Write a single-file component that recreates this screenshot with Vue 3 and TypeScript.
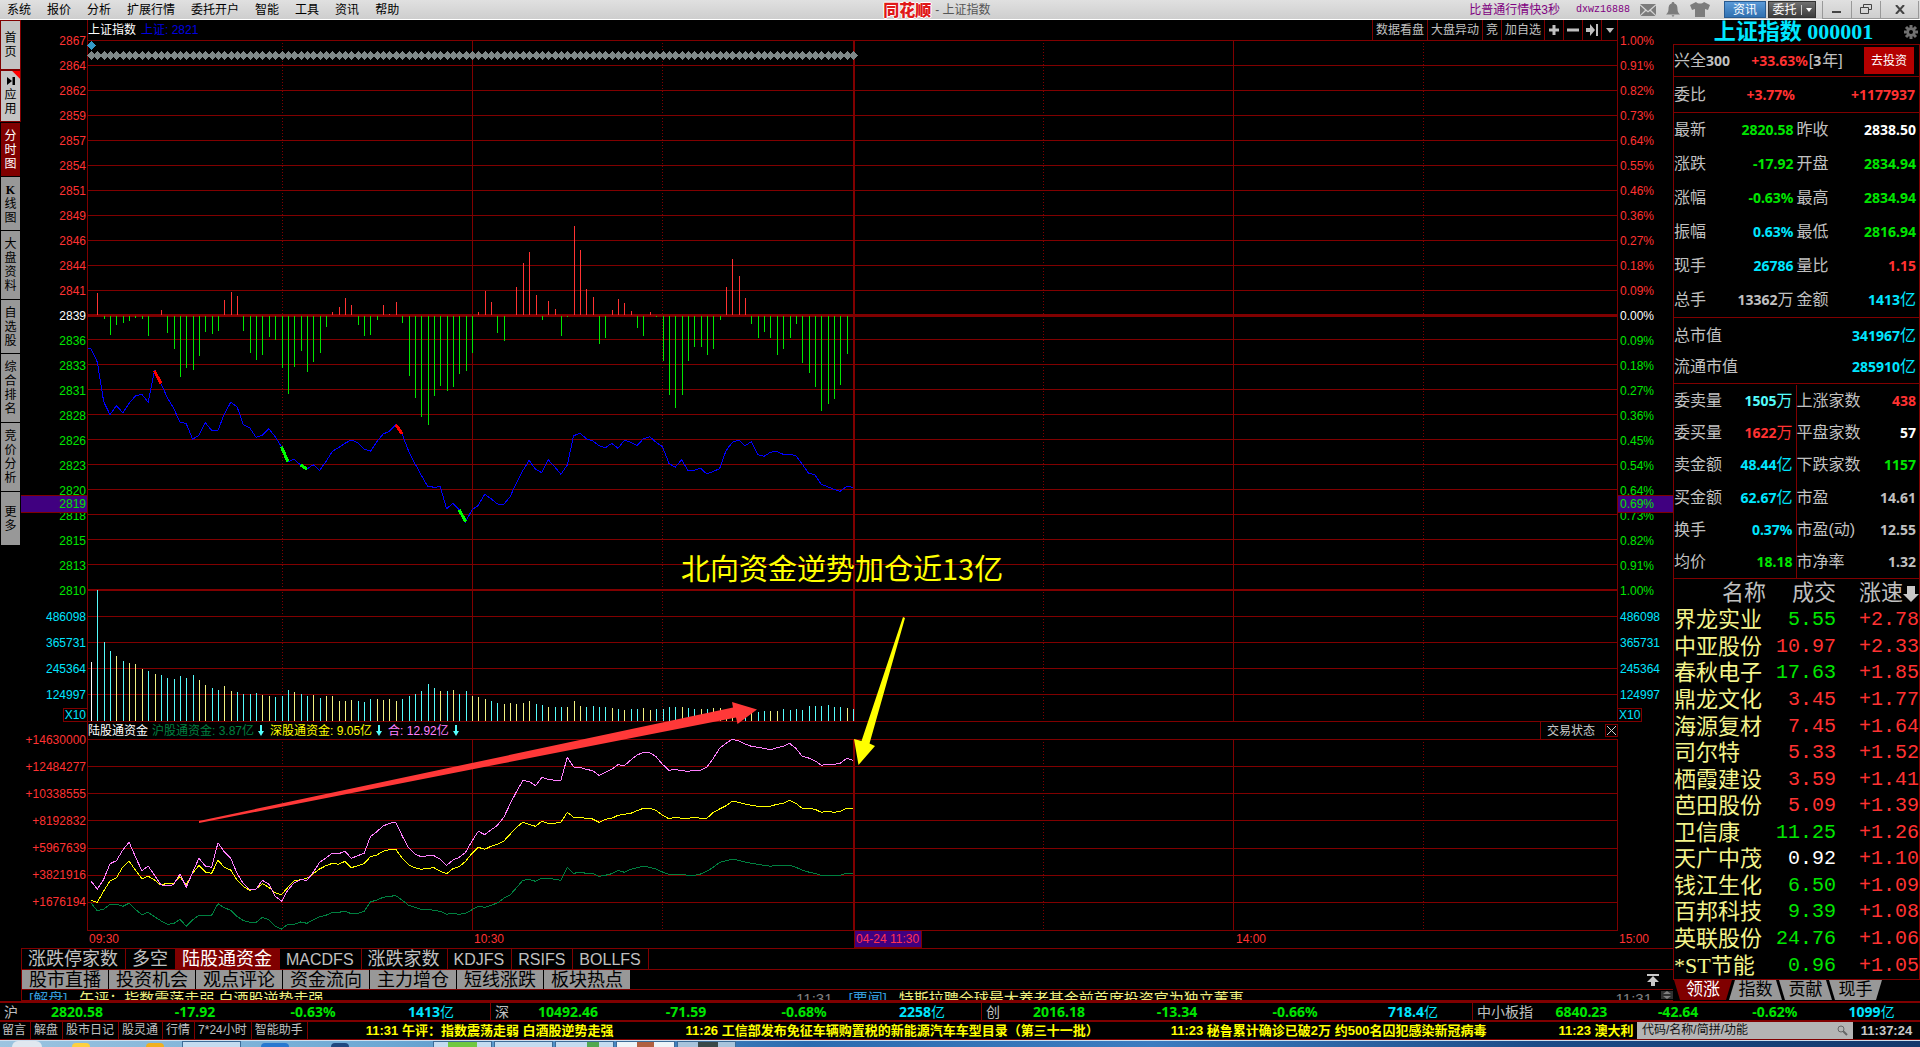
<script setup lang="ts">
type Tone = 'up' | 'down' | 'flat' | 'cyan' | 'aqua' | 'gray'
interface Quote { label: string; value: string; unit?: string; tone: Tone }
interface Stock { name: string; price: string; speed: string; tone: Tone }

const menus = ['系统', '报价', '分析', '扩展行情', '委托开户', '智能', '工具', '资讯', '帮助']

const sideTabs = [
  { text: '首页', kind: 'light', rows: 48 },
  { text: '应用', kind: 'light', rows: 50 },
  { text: '分时图', kind: 'active', rows: 53 },
  { text: 'K线图', kind: 'plain', rows: 53 },
  { text: '大盘资料', kind: 'plain', rows: 68 },
  { text: '自选股', kind: 'plain', rows: 53 },
  { text: '综合排名', kind: 'plain', rows: 68 },
  { text: '竞价分析', kind: 'plain', rows: 68 },
  { text: '更多', kind: 'plain', rows: 53 },
]

const prices = [2867, 2864, 2862, 2859, 2857, 2854, 2851, 2849, 2846, 2844, 2841, 2839, 2836, 2833, 2831, 2828, 2826, 2823, 2820, 2818, 2815, 2813, 2810]
const percents = [
  '1.00', '0.91', '0.82', '0.73', '0.64', '0.55', '0.46', '0.36', '0.27', '0.18', '0.09', '0.00',
  '0.09', '0.18', '0.27', '0.36', '0.45', '0.54', '0.64', '0.73', '0.82', '0.91', '1.00',
]
const volumes = ['486098', '365731', '245364', '124997']
const funds = ['+14630000', '+12484277', '+10338555', '+8192832', '+5967639', '+3821916', '+1676194']
const axisTone = (i: number) => (i < 11 ? 'up' : i === 11 ? 'flat' : 'down')

// Minute samples, 09:30 to 11:30
const x = (i: number) => 91 + 6.35 * i
const px = (i: number) => Math.round(x(i))
const minutes = Array.from({ length: 121 }, (_, i) => i)

const index = [
  446, 486, 605, 644, 617, 638, 610, 588, 583, 607, 513, 550, 592, 625, 666, 671, 718, 706, 668, 691,
  691, 642, 607, 620, 674, 684, 712, 706, 686, 710, 740, 785, 778, 795, 807, 794, 811, 785, 754, 743,
  730, 720, 728, 747, 754, 725, 702, 694, 674, 702, 752, 790, 825, 858, 862, 860, 926, 910, 930, 965,
  930, 916, 883, 896, 912, 913, 890, 848, 812, 781, 808, 818, 779, 800, 823, 795, 707, 700, 716, 722,
  737, 743, 730, 745, 721, 727, 737, 716, 710, 727, 740, 790, 802, 779, 811, 811, 805, 822, 814, 806,
  752, 727, 720, 737, 725, 764, 769, 757, 754, 763, 763, 767, 792, 820, 824, 853, 860, 868, 874, 859, 862,
]

const momentum = [
  0, -22, 4, 20, 10, 8, 6, 3, 4, 21, 1, -5, 18, 34, 62, 53, 55, 41, 17, 19,
  16, -15, -23, -19, 16, 38, 45, 40, 22, 25, 53, 79, 52, 36, 57, 47, 38, 12, -3, -8,
  -17, -10, 10, 21, 20, 5, -10, -1, -13, 8, 61, 83, 102, 110, 81, 71, 76, 72, 59, 56,
  38, -3, -24, -13, 18, 26, 1, -28, -52, -63, -20, 5, -14, -6, 21, 2, -89, -65, -26, -18,
  29, 23, -5, -16, -12, -4, 13, 21, -3, 2, 46, 80, 93, 80, 46, 32, 32, 40, 34, 5,
  -28, -56, -39, -17, 9, 23, 17, 23, 40, 34, 23, 9, 48, 58, 72, 96, 89, 84, 70, 39, 0,
]

const turnover = [
  59, 131, 79, 70, 65, 60, 58, 57, 52, 50, 47, 46, 43, 42, 45, 43, 46, 41, 36, 33,
  31, 35, 30, 29, 27, 27, 28, 26, 25, 24, 25, 31, 29, 27, 25, 26, 23, 25, 25, 20,
  20, 21, 20, 19, 22, 22, 21, 22, 20, 22, 25, 27, 30, 37, 33, 30, 30, 31, 27, 30,
  25, 24, 22, 20, 18, 17, 18, 17, 18, 20, 17, 16, 14, 14, 14, 14, 20, 15, 14, 15,
  14, 14, 13, 12, 11, 12, 12, 13, 11, 12, 12, 14, 14, 14, 13, 12, 12, 12, 13, 13,
  12, 11, 10, 10, 9, 9, 10, 10, 10, 12, 11, 12, 11, 15, 15, 15, 16, 14, 14, 13, 12,
]
// One letter per minute, ten minutes per group
const turnoverTone = [
  'wcccycyyyc', 'yccccccyyc', 'cyyccccyyc', 'ccyccycyyy', 'yycccyyyyc', 'cccccycycc',
  'yyyccyyyyy', 'ccyccyyycc', 'ccycyccyyc', 'cccyccycyy', 'yyccyccyyc', 'cccccccccyc',
].join('')
const turnoverColor: Record<string, string> = { w: '#ffffff', c: '#54fcfc', y: '#f0f080' }

const lower = (rows: number[]) => rows.map((v) => v + 480)
const total = [
  ...lower([
    243, 268, 238, 191, 182, 150, 127, 170, 212, 198, 226, 254, 258, 254, 222, 262, 217, 175, 198, 202,
    128, 156, 174, 220, 251, 270, 267, 241, 252, 288, 304, 270, 248, 239, 241, 217, 187, 174, 160, 161,
    154, 175, 167, 160, 110, 95, 78, 70, 67, 107, 143, 162, 170, 167, 167, 178, 196, 180, 172, 157,
  ]),
  603, 574, 584, 570, 556, 532, 492, 455, 422, 424, 437, 412, 418, 421, 421, 352, 381, 382, 388, 392,
  406, 397, 388, 374, 377, 360, 345, 337, 338, 350, 373, 391, 388, 392, 394, 391, 391, 381, 355, 325,
  310, 298, 303, 312, 319, 322, 325, 330, 323, 319, 310, 325, 349, 354, 362, 376, 373, 373, 370, 355, 361,
]
const shenzhen = [
  ...lower([
    301, 307, 273, 243, 233, 201, 184, 210, 236, 229, 240, 255, 250, 250, 230, 254, 220, 196, 216, 220,
    181, 202, 210, 240, 260, 271, 267, 251, 262, 278, 284, 262, 243, 239, 235, 221, 207, 197, 190, 193,
    184, 203, 197, 191, 170, 165, 154, 149, 148, 174, 194, 203, 208, 205, 203, 214, 221, 206, 200, 184,
  ]),
  640, 622, 628, 619, 613, 603, 583, 562, 547, 553, 559, 544, 550, 550, 547, 517, 532, 532, 535, 537,
  547, 538, 535, 526, 523, 520, 512, 505, 505, 511, 526, 536, 532, 535, 535, 532, 535, 535, 517, 507,
  497, 484, 487, 492, 496, 499, 499, 499, 493, 490, 481, 490, 505, 505, 508, 517, 514, 517, 514, 505, 505,
]
const shanghai = [
  ...lower([
    309, 332, 327, 313, 313, 319, 310, 328, 344, 337, 350, 362, 373, 371, 358, 379, 360, 346, 346, 346,
    311, 323, 331, 349, 362, 367, 367, 352, 359, 378, 387, 373, 373, 366, 370, 359, 350, 346, 337, 337,
    334, 341, 340, 334, 306, 300, 292, 289, 287, 300, 316, 322, 328, 328, 331, 334, 343, 340, 343, 340,
  ]),
  809, 799, 802, 796, 789, 775, 765, 743, 721, 718, 724, 715, 715, 718, 721, 682, 700, 697, 700, 700,
  709, 706, 701, 691, 697, 688, 683, 679, 682, 687, 696, 703, 703, 703, 706, 706, 702, 694, 682, 667,
  662, 658, 661, 666, 670, 673, 676, 679, 676, 676, 676, 682, 690, 696, 700, 706, 706, 706, 706, 700, 700,
]

const line = (rows: number[], base: number) =>
  rows.map((v, i) => `${x(i).toFixed(1)},${(base + v / 3).toFixed(1)}`).join(' ')
const segment = (i: number) =>
  `M${x(i)} ${200 + index[i] / 3}L${x(i + 1)} ${200 + index[i + 1] / 3}`

const priceLines = [40, 65, 90, 115, 140, 165, 190, 215, 240, 265, 290, 339, 364, 389, 414, 439, 464, 489, 514, 539, 564, 616, 642, 668, 694, 721]
const fundLines = [739, 766, 793, 820, 848, 875, 902, 930]
const hLines = (ys: number[]) => ys.map((y) => `M87 ${y + 0.5}H1618`).join('')
const bars = (sign: number) =>
  minutes
    .filter((i) => momentum[i] * sign > 0)
    .map((i) => `M${px(i) + 0.5} ${sign > 0 ? 316 : 315}V${315 + momentum[i]}`)
    .join('')
const volumeBars = (tone: string) =>
  minutes.filter((i) => turnoverTone[i] === tone).map((i) => `M${px(i) + 0.5} 721v${-turnover[i]}`).join('')
const diamonds = minutes.map((i) => `M${px(i) - 4} 55.5l4.5-4.5 4.5 4.5-4.5 4.5z`).join('')

const main: Quote[] = [
  { label: '最新', value: '2820.58', tone: 'down' }, { label: '昨收', value: '2838.50', tone: 'flat' },
  { label: '涨跌', value: '-17.92', tone: 'down' }, { label: '开盘', value: '2834.94', tone: 'down' },
  { label: '涨幅', value: '-0.63%', tone: 'down' }, { label: '最高', value: '2834.94', tone: 'down' },
  { label: '振幅', value: '0.63%', tone: 'cyan' }, { label: '最低', value: '2816.94', tone: 'down' },
  { label: '现手', value: '26786', tone: 'cyan' }, { label: '量比', value: '1.15', tone: 'up' },
  { label: '总手', value: '13362', unit: '万', tone: 'gray' }, { label: '金额', value: '1413', unit: '亿', tone: 'cyan' },
]
const caps: Quote[] = [
  { label: '总市值', value: '341967', unit: '亿', tone: 'cyan' },
  { label: '流通市值', value: '285910', unit: '亿', tone: 'cyan' },
]
const detail: Quote[] = [
  { label: '委卖量', value: '1505', unit: '万', tone: 'aqua' }, { label: '上涨家数', value: '438', tone: 'up' },
  { label: '委买量', value: '1622', unit: '万', tone: 'up' }, { label: '平盘家数', value: '57', tone: 'flat' },
  { label: '卖金额', value: '48.44', unit: '亿', tone: 'cyan' }, { label: '下跌家数', value: '1157', tone: 'down' },
  { label: '买金额', value: '62.67', unit: '亿', tone: 'cyan' }, { label: '市盈', value: '14.61', tone: 'gray' },
  { label: '换手', value: '0.37%', tone: 'cyan' }, { label: '市盈(动)', value: '12.55', tone: 'gray' },
  { label: '均价', value: '18.18', tone: 'down' }, { label: '市净率', value: '1.32', tone: 'gray' },
]
const stocks: Stock[] = [
  { name: '界龙实业', price: '5.55', speed: '+2.78', tone: 'down' },
  { name: '中亚股份', price: '10.97', speed: '+2.33', tone: 'up' },
  { name: '春秋电子', price: '17.63', speed: '+1.85', tone: 'down' },
  { name: '鼎龙文化', price: '3.45', speed: '+1.77', tone: 'up' },
  { name: '海源复材', price: '7.45', speed: '+1.64', tone: 'up' },
  { name: '司尔特', price: '5.33', speed: '+1.52', tone: 'up' },
  { name: '栖霞建设', price: '3.59', speed: '+1.41', tone: 'up' },
  { name: '芭田股份', price: '5.09', speed: '+1.39', tone: 'up' },
  { name: '卫信康', price: '11.25', speed: '+1.26', tone: 'down' },
  { name: '天广中茂', price: '0.92', speed: '+1.10', tone: 'flat' },
  { name: '钱江生化', price: '6.50', speed: '+1.09', tone: 'down' },
  { name: '百邦科技', price: '9.39', speed: '+1.08', tone: 'down' },
  { name: '英联股份', price: '24.76', speed: '+1.06', tone: 'down' },
  { name: '*ST节能', price: '0.96', speed: '+1.05', tone: 'down' },
]
const listTabs = ['领涨', '指数', '贡献', '现手']

const indicators = ['涨跌停家数', '多空', '陆股通资金', 'MACDFS', '涨跌家数', 'KDJFS', 'RSIFS', 'BOLLFS']
const isLatin = (s: string) => /^[A-Z]+$/.test(s)
const channels = ['股市直播', '投资机会', '观点评论', '资金流向', '主力增仓', '短线涨跌', '板块热点']
const news = [
  { tag: '[解盘]', title: '午评：指数震荡走弱 白酒股逆势走强', time: '11:31' },
  { tag: '[要闻]', title: '特斯拉聘全球最大养老基金前首席投资官为独立董事', time: '11:31' },
]
const markets = [
  { name: '沪', values: ['2820.58', '-17.92', '-0.63%'], amount: '1413' },
  { name: '深', values: ['10492.46', '-71.59', '-0.68%'], amount: '2258' },
  { name: '创', values: ['2016.18', '-13.34', '-0.66%'], amount: '718.4' },
  { name: '中小板指', values: ['6840.23', '-42.64', '-0.62%'], amount: '1099' },
]
const shortcuts = ['留言', '解盘', '股市日记', '股灵通', '行情', '7*24小时', '智能助手']
const ticker = [
  '11:31 午评：指数震荡走弱 白酒股逆势走强',
  '11:26 工信部发布免征车辆购置税的新能源汽车车型目录（第三十一批）',
  '11:23 秘鲁累计确诊已破2万 约500名囚犯感染新冠病毒',
  '11:23 澳大利',
]
</script>

<template>
  <div class="app">
    <header class="titlebar">
      <nav class="menus">
        <button v-for="m in menus" :key="m" type="button">{{ m }}</button>
      </nav>
      <div class="caption"><b>同花顺</b><span>- 上证指数</span></div>
      <div class="account">
        <a href="#" class="promo">比普通行情快3秒</a>
        <a href="#" class="user">dxwz16888</a>
        <button type="button" aria-label="消息">
          <svg width="16" height="12" viewBox="0 0 16 12"><path d="M0 0h16L8 7z M0 1.500v9.500L5 6z M16 1.500v9.500L11 6z M.5 12L6 7l2 1.500L10 7l5.500 5z" fill="#7c7c7c" /></svg>
        </button>
        <button type="button" aria-label="提醒">
          <svg width="14" height="15" viewBox="0 0 14 15"><path d="M7 0a1.300 1.300 0 0 1 1.300 1.500C11 2.300 11.500 4.500 11.500 7c0 3 1 4 2.500 5.500H0C1.500 11 2.500 10 2.500 7c0-2.500.5-4.700 3.200-5.500A1.300 1.300 0 0 1 7 0zM5.500 13.200h3L7 15z" fill="#7c7c7c" /></svg>
        </button>
        <button type="button" aria-label="皮肤">
          <svg width="20" height="15" viewBox="0 0 20 15"><path d="M6 0c2 2 6 2 8 0l6 3-2 5-3-1v8H5V7L2 8 0 3z" fill="#7c7c7c" /></svg>
        </button>
        <button type="button" class="chip blue">资讯</button>
        <button type="button" class="chip dark">委托<i></i><svg width="6" height="4" viewBox="0 0 6 4"><path d="M0 0h6L3 4z" fill="#fff" /></svg></button>
        <div class="window-keys">
          <button type="button" aria-label="最小化"><svg width="10" height="10" viewBox="0 0 10 10"><path d="M0 7h9v2H0z" fill="#444" /></svg></button>
          <button type="button" aria-label="还原"><svg width="12" height="10" viewBox="0 0 12 10"><path d="M3.500 3V.5h8v5H9M.5 3.500h8v6h-8z" fill="none" stroke="#444" /></svg></button>
          <button type="button" aria-label="关闭"><svg width="10" height="9" viewBox="0 0 10 9"><path d="M1 0l8 9M9 0L1 9" stroke="#444" stroke-width="2" /></svg></button>
        </div>
      </div>
    </header>

    <main class="body">
      <nav class="side">
        <button v-for="t in sideTabs" :key="t.text" type="button" :class="t.kind" :style="{ height: t.rows + 'px' }">
          <svg v-if="t.text === '应用'" class="skip" width="8" height="8" viewBox="0 0 8 8"><path d="M0 0l5 4-5 4zM5.500 0H8v8H5.500z" fill="#000" /></svg>
          <span v-for="c in t.text" :key="c" :class="{ latin: c === 'K' }">{{ c }}</span>
        </button>
      </nav>

      <section class="center">
        <div class="chart">
          <div class="axis left">
            <div class="price-labels">
              <span v-for="(p, i) in prices" :key="p" :class="axisTone(i)">{{ p }}</span>
            </div>
            <div class="vol-labels"><span v-for="v in volumes" :key="v">{{ v }}</span></div>
            <span class="scale">X10</span>
            <div class="fund-labels"><span v-for="f in funds" :key="f">{{ f }}</span></div>
            <span class="cursor-tag">2819</span>
          </div>

          <div class="plot">
            <div class="plot-head">
              <div class="series-name"><span>上证指数</span><span class="blue-text">上证: 2821</span></div>
              <div class="tools">
                <button type="button">数据看盘</button>
                <button type="button">大盘异动</button>
                <button type="button">竞</button>
                <button type="button">加自选</button>
                <button type="button" aria-label="放大"><svg width="12" height="12" viewBox="0 0 12 12"><path d="M4.500 1h3v3.500H11v3H7.500V11h-3V7.500H1v-3h3.500z" fill="#c0c0c0" /></svg></button>
                <button type="button" aria-label="缩小"><svg width="12" height="12" viewBox="0 0 12 12"><path d="M0 4.500h12v3H0z" fill="#c0c0c0" /></svg></button>
                <button type="button" aria-label="跳到最新"><svg width="12" height="12" viewBox="0 0 12 12"><path d="M0 4h4V0l5 6-5 6V8H0zM10 0h2v12h-2z" fill="#c0c0c0" /></svg></button>
                <button type="button" class="last" aria-label="更多"><svg width="8" height="5" viewBox="0 0 8 5"><path d="M0 0h8L4 5z" fill="#c0c0c0" /></svg></button>
              </div>
            </div>

            <svg class="pane price-pane" viewBox="87 40 1531 682" preserveAspectRatio="none" shape-rendering="crispEdges">
              <g stroke="#800000" fill="none">
                <path :d="hLines(priceLines)" />
                <path d="M87 315.500H1618" stroke-width="3" />
                <path d="M87 590H1618" stroke-width="2" />
                <path d="M87.500 40V722M472.500 40V721M1233.500 40V721M1617.500 40V722" />
                <path d="M282.500 43V721M662.500 43V721M1043.500 43V721M1423.500 43V721" stroke-dasharray="1 2" />
                <path d="M854 40V721" stroke-width="2" />
              </g>
              <path :d="bars(-1)" stroke="#ff3232" />
              <path :d="bars(1)" stroke="#00e600" />
              <path v-for="t in ['w', 'c', 'y']" :key="t" :d="volumeBars(t)" :stroke="turnoverColor[t]" />
              <polyline :points="'88,348.700 ' + line(index, 200)" fill="none" stroke="#0000ff" />
              <path :d="segment(10) + segment(48)" stroke="#ff0000" stroke-width="3" />
              <path :d="segment(30) + segment(33) + segment(58)" stroke="#00ff00" stroke-width="3" />
              <path d="M91 55.500H854" stroke="#7f8888" stroke-width="3" />
              <path :d="diamonds" fill="#7f8888" />
              <path d="M87 45.500l4.500-4.500 4.500 4.500-4.500 4.500z" fill="#3399c8" />
            </svg>

            <div class="fund-head">
              <span>陆股通资金</span>
              <span class="sh">沪股通资金: 3.87亿</span>
              <svg width="6" height="11" viewBox="0 0 6 11"><path d="M2 0h2v6h2L3 11 0 6h2z" fill="#54fcfc" /></svg>
              <span class="sz">深股通资金: 9.05亿</span>
              <svg width="6" height="11" viewBox="0 0 6 11"><path d="M2 0h2v6h2L3 11 0 6h2z" fill="#54fcfc" /></svg>
              <span class="sum">合: 12.92亿</span>
              <svg width="6" height="11" viewBox="0 0 6 11"><path d="M2 0h2v6h2L3 11 0 6h2z" fill="#54fcfc" /></svg>
              <button type="button" class="state">交易状态</button>
              <button type="button" class="close" aria-label="关闭"><svg width="9" height="9" viewBox="0 0 9 9"><path d="M0 0l9 9M9 0L0 9" stroke="#d0d0d0" /></svg></button>
            </div>

            <svg class="pane fund-pane" viewBox="87 739 1531 192" preserveAspectRatio="none" shape-rendering="crispEdges">
              <g stroke="#800000" fill="none">
                <path :d="hLines(fundLines)" />
                <path d="M87.500 739V931M472.500 739V931M1233.500 739V931M1617.500 739V931" />
                <path d="M282.500 742V931M662.500 742V931M1043.500 742V931M1423.500 742V931" stroke-dasharray="1 2" />
                <path d="M854 739V931" stroke-width="2" />
              </g>
              <polyline :points="line(shanghai, 640)" fill="none" stroke="#008040" />
              <polyline :points="line(shenzhen, 640)" fill="none" stroke="#ffff00" />
              <polyline :points="line(total, 640)" fill="none" stroke="#ff80ff" />
            </svg>

            <div class="times">
              <span>09:30</span><span>10:30</span><span class="now"><mark>04-24 11:30</mark></span><span>14:00</span>
            </div>

            <svg class="marks" viewBox="87 20 1531 928" preserveAspectRatio="none">
              <path d="M199 821L733 707.500 732 702 757 709.500 737.500 724 736 717.500 199 823z" fill="#ff3838" />
              <path d="M903 617L905 618 869.500 743.500 875 746 858.500 765 854 739 861.500 741z" fill="#ffff00" />
            </svg>
            <p class="note">北向资金逆势加仓近13亿</p>
          </div>

          <div class="axis right">
            <div class="price-labels">
              <span v-for="(p, i) in percents" :key="i" :class="axisTone(i)">{{ p }}%</span>
            </div>
            <div class="vol-labels"><span v-for="v in volumes" :key="v">{{ v }}</span></div>
            <span class="scale">X10</span>
            <span class="end-time">15:00</span>
            <span class="cursor-tag">0.69%</span>
          </div>
        </div>

        <nav class="indicators">
          <button v-for="t in indicators" :key="t" type="button" :class="{ active: t === '陆股通资金', latin: isLatin(t) }">{{ t }}</button>
        </nav>
        <nav class="channels">
          <button v-for="c in channels" :key="c" type="button">{{ c }}</button>
          <button type="button" class="to-top" aria-label="展开"><svg width="12" height="12" viewBox="0 0 12 12"><path d="M0 0h12v2H0zM6 2l6 6H8v4H4V8H0z" fill="#c8c8c8" /></svg></button>
        </nav>
        <div class="news">
          <a v-for="n in news" :key="n.tag" href="#"><em>{{ n.tag }}</em><span>{{ n.title }}</span><time>{{ n.time }}</time></a>
          <button type="button" class="spin" aria-label="滚动"><svg width="8" height="8" viewBox="0 0 8 8"><path d="M0 3h8L4 0zM0 5h8L4 8z" fill="#808080" /></svg></button>
        </div>
      </section>

      <aside class="panel">
        <h1>上证指数 000001
          <svg class="gear" width="16" height="16" viewBox="0 0 16 16"><path d="M8 1v14M1 8h14M3 3l10 10M13 3L3 13" stroke="#707070" stroke-width="3" /><circle cx="8" cy="8" r="4.500" fill="#707070" /><circle cx="8" cy="8" r="2" fill="#000" /></svg>
        </h1>
        <div class="fund-ad">
          <span>兴全<b>300</b></span>
          <span class="rate"><b class="up">+33.63%</b>[<b>3</b>年]</span>
          <button type="button">去投资</button>
        </div>
        <div class="ratio"><span>委比</span><b class="up">+3.77%</b><b class="up end">+1177937</b></div>
        <dl class="pairs main">
          <div v-for="q in main" :key="q.label"><dt>{{ q.label }}</dt><dd :class="q.tone"><b>{{ q.value }}</b>{{ q.unit }}</dd></div>
        </dl>
        <dl class="caps">
          <div v-for="q in caps" :key="q.label"><dt>{{ q.label }}</dt><dd :class="q.tone"><b>{{ q.value }}</b>{{ q.unit }}</dd></div>
        </dl>
        <dl class="pairs detail">
          <div v-for="q in detail" :key="q.label"><dt>{{ q.label }}</dt><dd :class="q.tone"><b>{{ q.value }}</b>{{ q.unit }}</dd></div>
        </dl>
        <table class="stocks">
          <thead>
            <tr><th>名称</th><th>成交</th><th>涨速<svg width="16" height="16" viewBox="0 0 16 16"><path d="M4 0h8v8h4l-8 8-8-8h4z" fill="#c8c8c8" /></svg></th></tr>
          </thead>
          <tbody>
            <tr v-for="s in stocks" :key="s.name"><td>{{ s.name }}</td><td :class="s.tone">{{ s.price }}</td><td class="up">{{ s.speed }}</td></tr>
          </tbody>
        </table>
        <nav class="list-tabs">
          <button v-for="t in listTabs" :key="t" type="button" :class="{ active: t === '领涨' }">{{ t }}</button>
        </nav>
      </aside>
    </main>

    <section class="markets">
      <div v-for="m in markets" :key="m.name">
        <span>{{ m.name }}</span>
        <b v-for="v in m.values" :key="v" class="down">{{ v }}</b>
        <span class="amount"><b>{{ m.amount }}</b>亿</span>
      </div>
    </section>

    <footer class="status">
      <nav><a v-for="s in shortcuts" :key="s" href="#">{{ s }}</a></nav>
      <div class="ticker"><a v-for="t in ticker" :key="t" href="#">{{ t }}</a></div>
      <label class="search">
        <input type="text" placeholder="代码/名称/简拼/功能" aria-label="代码/名称/简拼/功能" />
        <svg width="11" height="11" viewBox="0 0 11 11"><circle cx="4" cy="4" r="3" fill="none" stroke="#666" /><path d="M6 6l4 4" stroke="#666" stroke-width="2" /></svg>
      </label>
      <time>11:37:24</time>
    </footer>
    <div class="taskbar">
      <i class="orb"></i><i class="bit gold"></i><i class="bit amber"></i><i class="win"></i><i class="bit navy"></i><i class="bit ring"></i>
      <i class="win green"></i><i class="win"></i><i class="win leaf"></i><i class="win brown"></i><i class="win globe"></i>
    </div>
  </div>
</template>

<style>
body { margin: 0; background: #000; }
</style>

<style scoped>
.app {
  --line: #800000;
  display: flex;
  flex-direction: column;
  min-height: 100vh;
  background: #000;
  color: #c0c0c0;
  font: 12px/16px "Liberation Sans", "Noto Sans CJK SC", sans-serif;
  overflow: hidden;
}
.app * { box-sizing: border-box; }
button { font: inherit; color: inherit; background: none; border: 0; padding: 0; margin: 0; white-space: nowrap; }
a { color: inherit; text-decoration: none; white-space: nowrap; }
svg { display: block; flex: none; }
i { display: block; }
dl, dd, p, h1 { margin: 0; }

.up { color: #ff3232; }
.down { color: #00e600; }
.flat { color: #fff; }
.cyan { color: #00e6ff; }
.aqua { color: #54fcfc; }
.gray { color: #c0c0c0; }

.titlebar {
  display: grid;
  grid-template-columns: 46% auto 1fr;
  height: 20px;
  background: linear-gradient(#e0e0e0, #cecece);
  border-bottom: 1px solid #fff;
  color: #000;
}
.menus { display: flex; gap: 16px; padding-left: 7px; }
.caption { display: flex; align-items: center; gap: 4px; color: #555; }
.caption b {
  color: #e01818;
  font-size: 16px;
  font-weight: 900;
  text-shadow: 1px 0 #fff, -1px 0 #fff, 0 1px #fff, 0 -1px #fff;
}
.account { display: flex; align-items: center; justify-content: flex-end; padding-right: 1px; }
.promo { color: #800080; margin-right: 16px; }
.user { color: #800080; font: 10px/16px "Liberation Mono", monospace; }
.account > button { margin-left: 10px; }
.account > .chip {
  display: flex;
  align-items: center;
  justify-content: center;
  gap: 4px;
  height: 17px;
  width: 42px;
  color: #fff;
  margin-left: 14px;
  border: 1px solid #285a90;
}
.chip.blue { background: linear-gradient(#5a9ad8, #3070b0); }
.account > .chip.dark { width: 48px; margin-left: 2px; background: linear-gradient(#707070, #3c3c3c); border-color: #333; }
.chip i { width: 1px; height: 10px; background: #ccc; }
.window-keys { display: flex; margin-left: 6px; height: 18px; border: 1px solid #999; border-top: 0; }
.window-keys button { display: flex; align-items: center; justify-content: center; width: 29px; border-right: 1px solid #999; }
.window-keys button:last-child { width: 37px; border-right: 0; }

.body { display: grid; grid-template-columns: 21px minmax(0, 1fr) 247px; flex: 1; }

.side { display: flex; flex-direction: column; gap: 1px; padding: 1px 1px 0; }
.side button {
  display: flex;
  flex-direction: column;
  align-items: center;
  justify-content: center;
  width: 19px;
  background: #989898;
  color: #000;
  line-height: 14px;
}
.side .light { background: #c4c4c4; outline: 1px solid var(--line); margin-bottom: 1px; }
.side .light:nth-child(2) { background: linear-gradient(225deg, #f00 5px, #c4c4c4 6px); }
.side .active { background: var(--line); color: #fff; }
.side .latin { font-family: "Liberation Serif", serif; font-weight: bold; }
.skip { margin-bottom: 3px; }

.center { display: flex; flex-direction: column; min-width: 0; }
.chart { display: grid; grid-template-columns: 66px minmax(0, 1fr) 55px; }
.axis { position: relative; display: flex; flex-direction: column; padding-top: 9px; color: #00e6ff; }
.axis.left { text-align: right; align-items: flex-end; }
.axis.right { align-items: flex-start; }
.axis div { display: flex; flex-direction: column; padding: 0 2px; }
.axis.left div { padding: 0 1px; }
.price-labels span { line-height: 25px; }
.vol-labels span { line-height: 26px; }
.scale { height: 14px; padding: 0 1px; border: 1px solid var(--line); line-height: 12px; }
.axis.left .scale { border-right: 0; }
.axis.right .scale { border-left: 0; }
.fund-labels { margin-top: 5px; color: #ff3232; }
.fund-labels span { line-height: 27px; }
.end-time { margin-top: auto; padding-left: 1px; color: #ff3232; line-height: 18px; }
.cursor-tag {
  position: absolute;
  top: 475px;
  left: 0;
  right: 0;
  height: 18px;
  padding: 0 2px;
  border: 1px solid var(--line);
  border-width: 1px 0;
  background: #400080;
  color: #00e600;
}
.axis.left .cursor-tag { padding-right: 1px; }

.plot { position: relative; min-width: 0; }
.plot-head { display: flex; justify-content: space-between; height: 20px; border-left: 1px solid var(--line); }
.series-name { display: flex; gap: 5px; color: #fff; line-height: 20px; }
.blue-text { color: #0000e0; }
.tools { display: flex; border-right: 1px solid var(--line); height: 20px; }
.tools button { display: flex; align-items: center; justify-content: center; border-left: 1px solid var(--line); padding: 0 3px; min-width: 19px; }
.tools .last { min-width: 16px; }
.pane { width: 100%; }
.price-pane { height: 682px; }
.fund-pane { height: 192px; }
.fund-head { display: flex; align-items: center; height: 17px; color: #fff; border-left: 1px solid var(--line); white-space: nowrap; }
.fund-head svg { margin: 0 6px 0 4px; }
.sh { color: #008040; margin-left: 4px; }
.sz { color: #ff0; }
.sum { color: #ff80ff; }
.state { margin-left: auto; padding: 0 10px 0 6px; height: 17px; border-left: 1px solid var(--line); color: #c8c8c8; }
.close { display: flex; align-items: center; justify-content: center; width: 13px; height: 13px; border: 1px solid var(--line); }
.fund-head .close svg { margin: 0; }
.times { display: grid; grid-template-columns: 385fr 381fr 381fr 384fr; height: 17px; color: #ff3232; line-height: 16px; }
.times span { padding-left: 2px; white-space: nowrap; }
.times .now { padding-left: 1px; }
mark { display: inline-block; background: #400080; color: #ff3250; padding: 0 2px 0 1px; border: 1px solid var(--line); border-top: 0; line-height: 16px; }
.marks { position: absolute; inset: 0; width: 100%; height: 100%; }
.note {
  position: absolute;
  left: 38.8%;
  top: 526px;
  color: #ff0;
  font: 29px/42px "Noto Sans CJK SC", sans-serif;
  white-space: nowrap;
}

.indicators { display: flex; height: 22px; border: 1px solid var(--line); border-right: 0; }
.indicators button { padding: 0 7px 0 6px; border-right: 1px solid var(--line); font-size: 18px; line-height: 19px; }
.indicators .latin { font-size: 16px; }
.indicators .active { background: var(--line); color: #fff; }
.channels { display: flex; height: 20px; border-bottom: 1px solid var(--line); border-left: 1px solid var(--line); gap: 1px; }
.channels button { height: 19px; padding: 0 7px; background: #989898; color: #000; font-size: 18px; line-height: 16px; }
.channels .to-top { background: none; margin-left: auto; padding-right: 14px; }
.news { display: flex; height: 11px; padding: 1px 0; border-left: 1px solid var(--line); border-bottom: 1px solid var(--line); overflow: hidden; }
.news a { display: flex; flex: 1; height: 9px; padding-left: 7px; font-size: 15px; line-height: 16px; color: #f0f080; overflow: hidden; }
.news em { color: #3399d8; font-style: normal; margin-right: 12px; }
.news time { margin-left: auto; margin-right: 9px; color: #808080; }
.spin { width: 12px; background: #303030; display: flex; justify-content: center; }

.panel { display: flex; flex-direction: column; font-size: 16px; min-width: 0; }
b { font-family: "Noto Sans", "Noto Sans CJK SC", sans-serif; font-size: 14px; }
h1 {
  position: relative;
  height: 24px;
  padding-right: 6px;
  text-align: center;
  color: #00e6ff;
  font: bold 22px/24px "Liberation Serif", "Noto Sans CJK SC", serif;
}
.gear { position: absolute; right: 1px; top: 4px; }
.fund-ad, .ratio { display: flex; align-items: center; border: 1px solid var(--line); border-bottom: 0; }
.fund-ad { height: 32px; padding-right: 5px; }
.rate { margin: 0 auto; }
.rate b { margin-right: 1px; }
.fund-ad button { width: 50px; height: 27px; background: #b40000; color: #fff; font-size: 12px; }
.ratio { height: 36px; padding-right: 4px; }
.ratio b { width: 89px; text-align: right; }
.ratio .end { margin-left: auto; }
.pairs { display: grid; grid-template-columns: 1fr 1fr; border: 1px solid var(--line); border-bottom: 0; grid-auto-rows: 1fr; }
.pairs.main { height: 205px; }
.pairs.detail { height: 195px; padding-top: 1px; }
.pairs div, .caps div { display: flex; align-items: center; justify-content: space-between; white-space: nowrap; padding-right: 3px; }
.pairs.detail div:nth-child(odd) { border-right: 1px solid var(--line); }
.caps { height: 66px; padding-top: 2px; border: 1px solid var(--line); border-bottom: 0; display: grid; grid-auto-rows: 1fr; }
.stocks {
  width: 100%;
  height: 402px;
  border-collapse: separate;
  border-spacing: 0;
  border: 1px solid var(--line);
  table-layout: fixed;
  font: 22px/24px "Liberation Serif", "Noto Sans CJK SC", serif;
}
.stocks th, .stocks td { height: 26px; padding: 0; white-space: nowrap; text-align: right; }
.stocks th { height: 28px; font-weight: normal; }
.stocks th:first-child { width: 92px; }
.stocks th:nth-child(2) { width: 70px; }
.stocks th svg { display: inline-block; vertical-align: -2px; }
.stocks td { font: 20px/24px "Liberation Mono", monospace; }
.stocks td:first-child { text-align: left; color: #f4f48c; font: 22px/24px "Liberation Serif", "Noto Sans CJK SC", serif; }
.list-tabs { display: flex; height: 21px; padding-left: 1px; }
.list-tabs button {
  width: 53px;
  height: 20px;
  margin-right: -3px;
  font-size: 17px;
  line-height: 18px;
  background: #989898;
  color: #000;
  clip-path: polygon(0 0, calc(100% - 6px) 0, 100% 100%, 6px 100%);
}
.list-tabs .active { width: 58px; background: var(--line); color: #fff; clip-path: polygon(0 0, 100% 0, calc(100% - 6px) 100%, 6px 100%); }
.list-tabs button:nth-child(2) { clip-path: polygon(6px 0, calc(100% - 6px) 0, 100% 100%, 0 100%); }
.list-tabs button:last-child { clip-path: polygon(0 0, 100% 0, calc(100% - 6px) 100%, 6px 100%); }

.markets { display: grid; grid-template-columns: 490fr 491fr 491fr 448fr; height: 21px; border: solid var(--line); border-width: 2px 0; }
.markets div { display: grid; grid-template-columns: auto repeat(4, 1fr); align-items: center; padding-left: 4px; font-size: 14px; text-align: center; line-height: 16px; }
.markets div + div { border-left: 1px solid var(--line); }
.amount { color: #00e6ff; }

.status { display: flex; height: 18px; border-bottom: 1px solid var(--line); line-height: 17px; }
.status nav { display: flex; }
.status nav a { padding: 0 4px 0 3px; border-right: 1px solid var(--line); }
.status nav a:first-child { padding-left: 2px; }
.ticker { display: flex; flex: 1; min-width: 0; gap: 72px; padding-left: 58px; overflow: hidden; color: #ff0; font-weight: bold; font-size: 13px; }
.search { display: flex; align-items: center; width: 216px; padding: 0 5px; background: #b4b4b4; }
.search input { flex: 1; min-width: 0; border: 0; padding: 0; background: none; font: inherit; color: #000; outline: 0; }
.search input::placeholder { color: #111; opacity: 1; }
.status time { width: 67px; text-align: center; font-weight: bold; font-size: 13px; color: #c8c8c8; }

.taskbar { display: flex; align-items: flex-end; height: 7px; overflow: hidden; background: linear-gradient(90deg, #9cc4e0, #6ca8d4 20%, #2c6cb0 42%, #3c7cc0 60%, #1c4c88 80%, #14386c); border-top: 1px solid #cfe0f0; }
.orb { width: 30px; height: 6px; margin-left: 12px; background: #e0e8f0; border-radius: 15px 15px 0 0; }
.bit { width: 18px; height: 4px; margin-left: 30px; border-radius: 8px 8px 0 0; background: #ffd040; }
.bit.amber { margin-left: 56px; background: #f0b020; }
.bit.navy { width: 28px; margin-left: 20px; background: #2878d0; }
.bit.ring { margin-left: 42px; background: #204880; }
.win { width: 59px; height: 6px; margin-left: 2px; background: #c4dcf0; border: 1px solid #3c6c98; border-bottom: 0; }
.bit + .win { margin-left: 18px; }
.bit + .win.green { margin-left: 84px; }
.win.green { background: linear-gradient(90deg, #c4dcf0 25%, #70c840 25% 75%, #c4dcf0 75%); }
.win.leaf { background: linear-gradient(90deg, #c4dcf0 55%, #50a850 55% 75%, #c4dcf0 75%); }
.win.brown { background: linear-gradient(90deg, #eef4f8 35%, #b06040 35% 65%, #eef4f8 65%); }
.win.globe { background: linear-gradient(90deg, #a8c4dc 35%, #384848 35% 70%, #a8c4dc 70%); }
</style>
